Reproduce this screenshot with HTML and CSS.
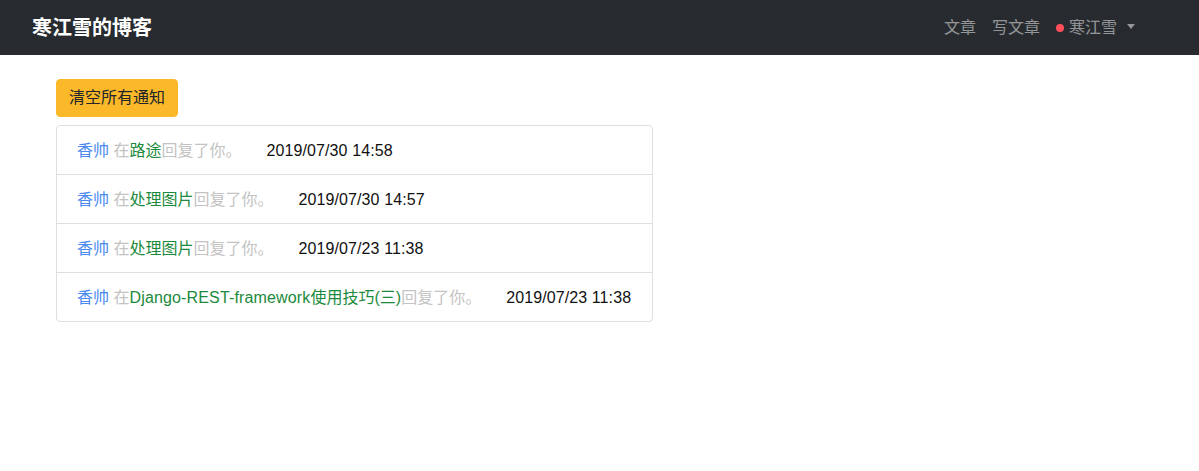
FILE: index.html
```html
<!DOCTYPE html>
<html lang="zh">
<head>
<meta charset="utf-8">
<title>寒江雪的博客</title>
<link rel="stylesheet" href="styles.css">
</head>
<body>
<nav class="navbar">
  <a class="brand" href="#">寒江雪的博客</a>
  <ul class="nav">
    <li><a href="#">文章</a></li>
    <li><a href="#">写文章</a></li>
    <li><a href="#" class="user"><span class="dot"></span>寒江雪<span class="caret"></span></a></li>
  </ul>
</nav>
<main class="content">
  <button class="btn-warning">清空所有通知</button>
  <ul class="list">
    <li class="item"><span class="who">香帅</span> <span class="muted">在</span><a class="post" href="#">路途</a><span class="muted">回复了你。</span><span class="date">2019/07/30 14:58</span></li>
    <li class="item"><span class="who">香帅</span> <span class="muted">在</span><a class="post" href="#">处理图片</a><span class="muted">回复了你。</span><span class="date">2019/07/30 14:57</span></li>
    <li class="item"><span class="who">香帅</span> <span class="muted">在</span><a class="post" href="#">处理图片</a><span class="muted">回复了你。</span><span class="date">2019/07/23 11:38</span></li>
    <li class="item"><span class="who">香帅</span> <span class="muted">在</span><a class="post" href="#"><span class="latin">Django-REST-framework</span>使用技巧(三)</a><span class="muted">回复了你。</span><span class="date">2019/07/23 11:38</span></li>
  </ul>
</main>
</body>
</html>
```
FILE: styles.css
```css
* { box-sizing: border-box; }
body {
  margin: 0;
  font-family: "Liberation Sans", "Noto Sans CJK SC", sans-serif;
  font-size: 16px;
  line-height: 1.5;
  color: #212529;
  background: #fff;
}
a { text-decoration: none; }
.navbar {
  height: 55px;
  background: #272b30;
  display: flex;
  align-items: center;
  justify-content: space-between;
  padding: 0 56px 0 32px;
}
.brand {
  color: #fff;
  font-size: 20px;
  font-weight: 600;
  line-height: 30px;
}
.nav {
  list-style: none;
  margin: 0;
  padding: 0;
  display: flex;
}
.nav a {
  display: flex;
  align-items: center;
  padding: 8px 8px;
  color: rgba(255,255,255,.5);
  font-size: 16px;
  line-height: 24px;
}
.dot {
  width: 8px;
  height: 8px;
  border-radius: 50%;
  background: #ff4d5b;
  margin-right: 5px;
}
.caret {
  display: inline-block;
  margin-left: 10px;
  border-top: 5px solid rgba(255,255,255,.5);
  border-left: 4.5px solid transparent;
  border-right: 4.5px solid transparent;
  margin-top: -3px;
}
.content {
  padding: 24px 56px;
}
.btn-warning {
  display: block;
  font: inherit;
  font-size: 16px;
  line-height: 24px;
  padding: 6px 12px;
  border: 1px solid #fbb829;
  border-radius: 4px;
  background: #fbb829;
  color: #212529;
  margin-bottom: 8px;
}
.list {
  list-style: none;
  margin: 0;
  padding: 0;
  width: 597px;
  border: 1px solid rgba(0,0,0,.125);
  border-radius: 4px;
}
.item {
  padding: 13px 20px 11px;
  line-height: 24px;
  white-space: nowrap;
  border-top: 1px solid rgba(0,0,0,.125);
}
.item:first-child { border-top: 0; }
.who { color: #4d8af0; }
.muted { color: #c3c3c3; }
.post { color: #1c8a3c; }
.latin { letter-spacing: 0.15px; }
.date { margin-left: 25px; color: #111; letter-spacing: 0.1px; }
```
